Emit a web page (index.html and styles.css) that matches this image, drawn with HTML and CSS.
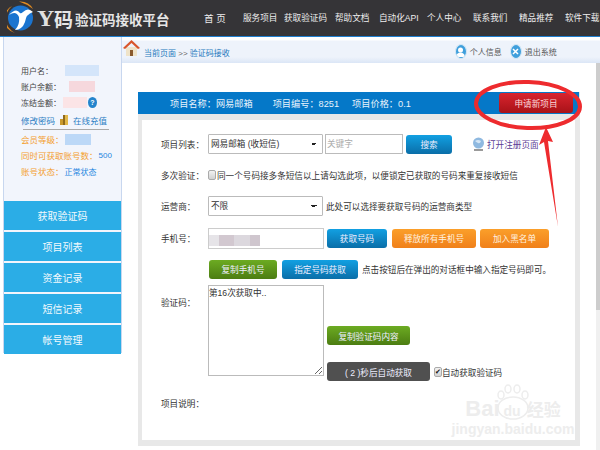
FILE: index.html
```html
<!doctype html>
<html lang="zh-CN">
<head>
<meta charset="UTF-8">
<title>Y码验证码接收平台</title>
<link rel="stylesheet" href="styles.css">
</head>
<body>
<div class="page">
	<div class="header">
		<svg class="logo" width="28" height="34" viewBox="0 0 28 34">
			<circle cx="13.500" cy="17" r="12.500" fill="#1b74cf"/>
			<path d="M5 5 A14.500 14.500 0 0 0 8 32 A16 16 0 0 1 5 5Z M12 0.500 Q22 0 26 8 Q20 3 12 0.500Z" fill="#e08a20"/>
			<path d="M2 14 Q9 9 12 16 Q13 24 8 29 Q15 29 18 21 Q19 13 26 11 Q21 6 16 11 Q14 13 13 12 Q9 6 2 14Z" fill="#fff"/>
		</svg>
		<div class="brand-y">Y</div>
		<div class="brand-ma">码</div>
		<div class="brand-title">验证码接收平台</div>
		<div class="nav">
			<a class="nav-home">首 页</a>
			<a>服务项目</a>
			<a>获取验证码</a>
			<a>帮助文档</a>
			<a>自动化API</a>
			<a>个人中心</a>
			<a>联系我们</a>
			<a>精品推荐</a>
			<a>软件下载</a>
		</div>
	</div>

	<div class="layout">
		<div class="sidebar">
			<div class="info">
				<div class="info-row">用户名：<span class="blur blur-blue"></span></div>
				<div class="info-row">账户余额：<span class="blur blur-pink"></span></div>
				<div class="info-row">冻结金额：<span class="blur blur-rose"></span><span class="help">?</span></div>
				<div class="info-row info-links">
					<a>修改密码</a>
					<svg width="10" height="12" viewBox="0 0 10 12"><path d="M1 5h4v6H1z" fill="#c99a2e"/><path d="M4 1h5v10H4z" fill="#e2b84a"/><path d="M4 1h2v10H4z" fill="#8f6a1c"/></svg>
					<a>在线充值</a>
				</div>
				<div class="info-rule"></div>
				<div class="info-row info-orange">会员等级：<span class="blur blur-sky"></span></div>
				<div class="info-row info-orange">同时可获取账号数： <span class="info-value">500</span></div>
				<div class="info-row info-orange">账号状态：<span class="info-value">正常状态</span></div>
			</div>
			<div class="menu">
				<a>获取验证码</a>
				<a>项目列表</a>
				<a>资金记录</a>
				<a>短信记录</a>
				<a>帐号管理</a>
			</div>
		</div>

		<div class="main">
			<div class="crumb-bar">
				<svg class="home" width="17" height="18" viewBox="0 0 17 18"><path d="M3 8h11v9H3z" fill="#efe3c8"/><path d="M7 11h3v6H7z" fill="#8a5a2c"/><path d="M0 9 8.500 1 17 9l-2 1-6.500-6L2 10z" fill="#d8552b"/></svg>
				<span class="crumb"><a>当前页面</a> &gt;&gt; <a>验证码接收</a></span>
				<span class="crumb-user">
					<span class="round-icon"><svg width="9" height="10" viewBox="0 0 9 10"><circle cx="4.500" cy="3" r="2.500" fill="#fff"/><path d="M0 10c0-6 9-6 9 0z" fill="#fff"/></svg></span>
					个人信息
					<span class="round-icon round-exit"><svg width="7" height="7" viewBox="0 0 7 7"><path d="M1 1l5 5M6 1L1 6" stroke="#fff" stroke-width="1.500"/></svg></span>
					退出系统
				</span>
			</div>

			<div class="content">
				<div class="content-area">
					<div class="panel">
						<div class="panel-head">
							<span class="head-name">项目名称：网易邮箱</span>
							<span class="head-no">项目编号：8251</span>
							<span>项目价格：0.1</span>
							<a class="btn btn-red">申请新项目</a>
						</div>
						<div class="panel-body">
							<div class="row">
								<label>项目列表：</label>
								<select class="field"><option>网易邮箱 (收短信)</option></select>
								<input class="keyword" placeholder="关键字">
								<a class="btn btn-blue btn-search">搜索</a>
								<svg class="globe" width="13" height="14" viewBox="0 0 13 14"><circle cx="6.500" cy="6" r="5.500" fill="#8fb9e0"/><path d="M3 4q3-2 6 0-1 3-3 2t-3-2z" fill="#d5e6f5"/><path d="M2 12h9v2H2z" fill="#9a9a9a"/></svg>
								<a class="open-link">打开注册页面</a>
							</div>
							<div class="row">
								<label>多次验证：</label>
								<input class="check" type="checkbox">
								<span>同一个号码接多条短信以上请勾选此项，以便锁定已获取的号码来重复接收短信</span>
							</div>
							<div class="row">
								<label>运营商：</label>
								<select class="field"><option>不限</option></select>
								<span class="hint">此处可以选择要获取号码的运营商类型</span>
							</div>
							<div class="row row-tall">
								<label>手机号：</label>
								<div class="phone"><span class="phone-blur"></span></div>
								<a class="btn btn-blue btn-get">获取号码</a>
								<a class="btn btn-orange btn-release">释放所有手机号</a>
								<a class="btn btn-orange btn-black">加入黑名单</a>
							</div>
							<div class="row row-copy">
								<a class="btn btn-green btn-copy">复制手机号</a>
								<a class="btn btn-blue btn-assign">指定号码获取</a>
								<span>点击按钮后在弹出的对话框中输入指定号码即可。</span>
							</div>
							<div class="row row-code">
								<label>验证码：</label>
								<textarea class="code">第16次获取中..</textarea>
								<div class="code-actions">
									<a class="btn btn-green btn-copy-code">复制验证码内容</a>
									<div class="auto">
										<a class="btn btn-dark">( 2 )秒后自动获取</a>
										<input class="check check-auto" type="checkbox" checked>
										<span>自动获取验证码</span>
									</div>
								</div>
							</div>
							<div class="row row-desc">
								<label>项目说明：</label>
							</div>
						</div>
						<div class="watermark">
							<svg width="34" height="36" viewBox="0 0 34 36" fill="#fff" stroke="#ededed" stroke-width="1.500"><ellipse cx="5" cy="11" rx="3" ry="4"/><ellipse cx="12" cy="5" rx="3" ry="4"/><ellipse cx="21" cy="5" rx="3" ry="4"/><ellipse cx="29" cy="11" rx="3" ry="4"/><ellipse cx="17" cy="24" rx="15" ry="11"/></svg>
							<div class="wm-line"><span class="wm-logo">Bai</span><span class="wm-du">du</span><span class="wm-cn">经验</span></div>
							<div class="wm-url">jingyan.baidu.com</div>
						</div>
					</div>
				</div>
				<div class="scrollbar"><div class="thumb"></div></div>
			</div>
		</div>
	</div>

	<svg class="markup" width="600" height="450" viewBox="0 0 600 450">
		<ellipse cx="528" cy="105" rx="52" ry="23" transform="rotate(2 528 105)" fill="none" stroke="#ee2b2e" stroke-width="4"/>
		<path d="M546 127 553 142 548 141 558 227 544 142 539 145z" fill="#ee2b2e"/>
	</svg>
</div>
</body>
</html>
```

FILE: styles.css
```css
*{box-sizing:border-box;}
html,body{margin:0;padding:0;height:450px;overflow:hidden;background:#fff;}
body{font-family:"Liberation Sans","Noto Sans CJK SC",sans-serif;font-size:8.6px;color:#333;}
a{text-decoration:none;}
.page{width:600px;height:450px;overflow:hidden;position:relative;}

.header{height:37px;background:#353437;border-bottom:1px solid #1f7fd0;display:flex;align-items:center;padding-left:7px;color:#eee;white-space:nowrap;}
.logo{flex:none;}
.brand-y{font-family:"Liberation Serif",serif;font-size:24px;font-weight:bold;color:#e0e0e0;margin-left:2px;width:16px;}
.brand-ma{font-size:19px;font-weight:bold;color:#e6e6e6;margin-left:1px;width:19px;}
.brand-title{font-size:13.500px;font-weight:bold;color:#e6e6e6;margin-left:2px;margin-top:1px;width:95px;}
.nav{display:grid;grid-template-columns:39px 41px 51px 44px 48px 46px 46px 46px 35px;margin-left:34px;color:#eee;flex:none;}
.nav-home{font-size:9.500px;}

.layout{display:flex;height:413px;}
.sidebar{width:119px;margin-left:3px;height:316px;background:#f2f5fc;border:solid #c8d7ef;border-width:0 1px 1px 1px;flex:none;display:flex;flex-direction:column;}
.info{height:164px;flex:none;padding:25px 0 0 17px;font-size:8px;color:#444;}
.info-row{height:16px;display:flex;align-items:center;white-space:nowrap;}
.blur{display:inline-block;height:11px;}
.blur-blue{width:34px;margin-left:12px;background:#d4e5fa;}
.blur-pink{width:26px;margin-left:8px;background:#f6d8dd;}
.blur-rose{width:24px;margin-left:2px;background:#fbe4e6;}
.blur-sky{width:26px;margin-left:1px;background:#bcd8f7;}
.help{width:9px;height:11px;border-radius:50%;background:#2484cc;color:#fff;font-size:7px;font-weight:bold;text-align:center;line-height:11px;margin-left:1px;}
.info-links{margin-top:2px;gap:4px;color:#2c7ec4;font-size:8.500px;}
.info-rule{width:86px;height:1px;background:#a9a9a9;margin:1px 0 1px 2px;}
.info-orange{color:#f4a030;font-size:8.500px;}
.info-value{color:#1f86e0;margin-left:1px;font-size:8px;}
.menu{display:flex;flex-direction:column;gap:2px;flex:none;}
.menu a{height:29px;background:#2bade6;color:#f2f9fd;font-size:10px;display:flex;align-items:center;justify-content:center;}

.main{flex:1;min-width:0;display:flex;flex-direction:column;}
.crumb-bar{height:26px;flex:none;padding-top:4px;background-image:linear-gradient(#fff 3px,#eef3fb 4px,#eef3fb 20px,#dbe6f6 100%);display:flex;align-items:center;font-size:8px;color:#666;white-space:nowrap;}
.home{margin:-9px 4px 0 1px;flex:none;}
.crumb a{color:#2579bd;}
.crumb-user{margin-left:225px;margin-top:-1px;display:flex;align-items:center;gap:3px;color:#555;}
.round-icon{width:12px;height:15px;border-radius:50%;background:#3f9fdc;border:1px solid #d5e8f6;display:flex;align-items:center;justify-content:center;overflow:hidden;}
.round-exit{margin-left:5px;}

.content{flex:1;display:flex;min-height:0;}
.content-area{flex:1;padding:29px 0 0 16px;min-width:0;}
.scrollbar{width:4px;background:#f0f0f0;}
.thumb{height:247px;background:#cdcdcd;}

.panel{width:442px;height:354px;background:#e8e8e8;padding:0 5px 6px 4px;position:relative;}
.panel-head{height:22px;background:#0578c8;margin:0 -4px;display:flex;align-items:center;padding-left:32px;gap:16px;color:#e8f3fb;font-size:9.200px;white-space:nowrap;}
.head-name{margin-right:4px;}
.head-no{margin-right:-3px;}
.panel-head .btn-red{margin-left:auto;margin-right:6px;}
.panel-body{background:#fff;height:320px;margin-top:6px;padding:14px 0 0 19px;}

.row{display:flex;align-items:center;height:20px;margin-bottom:11px;white-space:nowrap;}
.row label{width:47px;flex:none;}
.row-tall{margin-top:12px;}
.row-copy{margin-left:48px;margin-bottom:6px;}
.row-code{height:96px;align-items:flex-start;margin-bottom:13px;}
.row-code label{padding-top:11px;}
.row-desc{height:18px;}

.field{width:115px;height:20px;border:1px solid #bbb;font:8.600px "Liberation Sans","Noto Sans CJK SC",sans-serif;color:#333;padding:0 0 0 2px;border-radius:1px;appearance:none;background-color:#fff;background-image:linear-gradient(45deg,transparent 50%,#222 50%),linear-gradient(-45deg,transparent 50%,#222 50%);background-size:3px 3px;background-position:right 8px center,right 5px center;background-repeat:no-repeat;}
.keyword{width:78px;height:20px;border:1px solid #bbb;margin-left:2px;padding:0 1px;font:8.600px "Liberation Sans","Noto Sans CJK SC",sans-serif;}
.keyword::placeholder{color:#aaa;}
.hint{margin-left:3px;}
.check{appearance:none;width:8px;height:10px;margin:0 1px 0 0;flex:none;border:1px solid #aaa;border-radius:2px;background:linear-gradient(#f2f2f2,#d2d2d2);position:relative;}
.check:checked::after{content:"✔";position:absolute;left:0;top:-1px;font-size:7px;line-height:10px;color:#111;}
.check-auto{margin-right:0;}
.phone{width:116px;height:21px;border:1px solid #ccc;flex:none;padding-top:6px;}
.phone-blur{display:block;width:51px;height:11px;background:linear-gradient(90deg,#e6e4e8 0 20%,#d2c8d0 20% 50%,#dcd8de 50% 80%,#cfc6ce 80%);}
.code{width:116px;height:91px;border:1px solid #bbb;margin:0;padding:0;font:8.600px "Liberation Sans","Noto Sans CJK SC",sans-serif;color:#333;flex:none;}
.code-actions{margin-left:3px;padding-top:41px;display:flex;flex-direction:column;gap:17px;}
.auto{display:flex;align-items:center;}
.auto .btn{margin-right:4px;}

.btn{height:19px;border-radius:3px;color:#eef;font-size:8.600px;display:inline-flex;align-items:center;justify-content:center;flex:none;}
.btn-blue{background:linear-gradient(#12a0e2,#0a6ea8);}
.btn-orange{background:linear-gradient(#fb9f2a,#f0801a);color:#fff3e0;}
.btn-green{background:linear-gradient(#6cab22,#4c7d12);}
.btn-dark{width:103px;background:#505050;}
.btn-red{width:74px;height:20px;background:linear-gradient(#d8242e,#a81218);color:#fbd9d9;}
.btn-search{width:46px;margin-left:3px;}
.globe{margin-left:20px;flex:none;}
.open-link{color:#5b3c94;margin-left:2px;}
.btn-get{width:60px;margin-left:3px;}
.btn-release{width:84px;margin-left:5px;}
.btn-black{width:69px;margin-left:4px;}
.btn-copy{width:68px;}
.btn-assign{width:76px;margin:0 4px 0 5px;}
.btn-copy-code{width:83px;}

.watermark{position:absolute;left:318px;top:292px;width:114px;color:#ededed;display:flex;flex-direction:column;align-items:center;}
.wm-line{display:flex;align-items:baseline;margin-top:-24px;font-weight:bold;}
.wm-logo{font-size:22px;}
.wm-du{font-size:14px;margin-left:4px;}
.wm-cn{font-size:17px;margin-left:6px;}
.wm-url{font-size:14px;font-weight:bold;margin-top:-1px;}

.markup{position:absolute;left:0;top:0;pointer-events:none;}
```
